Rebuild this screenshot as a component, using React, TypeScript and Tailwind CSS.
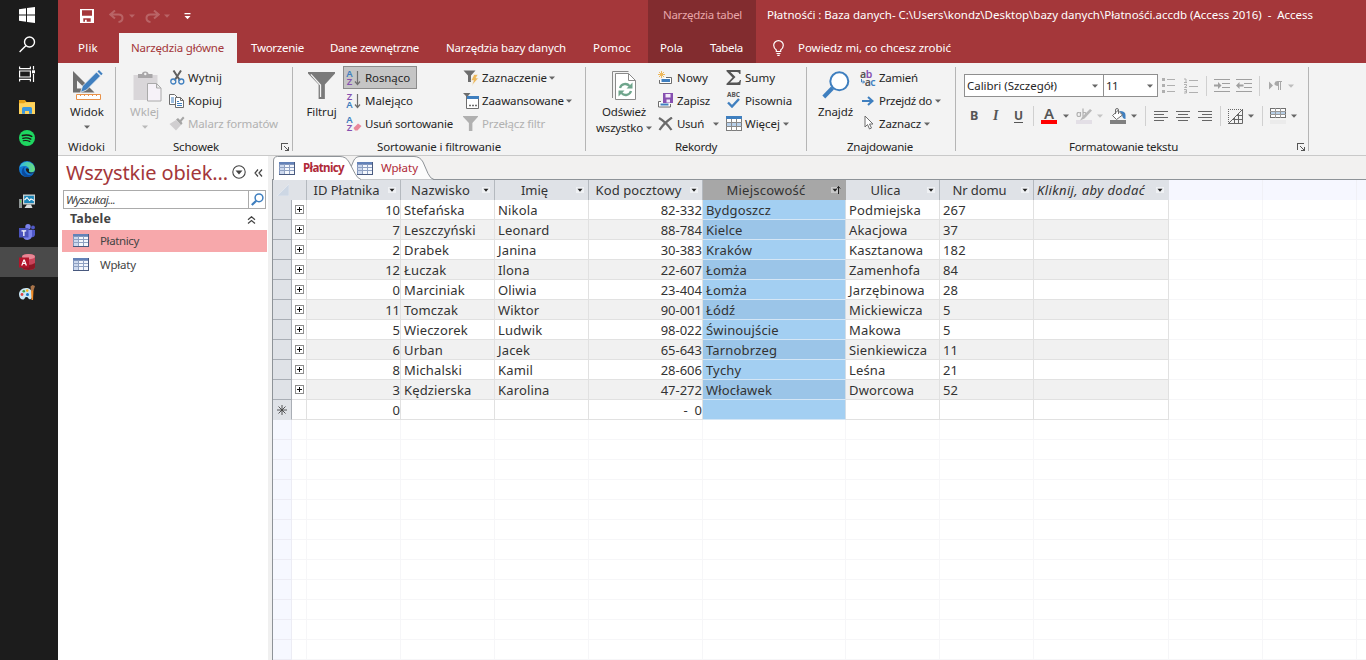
import { useLayoutEffect, useRef, useState } from 'react';
import type { ReactNode } from 'react';

/* Text label whose letter spacing is computed so that it spans `w` pixels. */
function T({ w, className = '', children }: { w: number; className?: string; children: string }) {
  const ref = useRef<HTMLSpanElement>(null);
  const [spacing, setSpacing] = useState(0);
  useLayoutEffect(() => {
    if (!ref.current) return;
    const natural = ref.current.getBoundingClientRect().width;
    setSpacing((w - natural) / children.length);
  }, [w, children]);
  return (
    <span ref={ref} className={`inline-block shrink-0 whitespace-pre ${className}`} style={{ letterSpacing: spacing }}>
      {children}
    </span>
  );
}

function Caret({ className = 'text-[#666]' }: { className?: string }) {
  return (
    <svg width="6" height="4" viewBox="0 0 6 4" className={`shrink-0 ${className}`}>
      <path d="M0 0.5h6L3 3.7z" fill="currentColor" />
    </svg>
  );
}

/* ---------- Taskbar ---------- */

const taskIcons: { top: string; icon: ReactNode; active?: boolean }[] = [
  {
    top: 'h-[29px]',
    icon: (
      <svg width="16" height="16" viewBox="0 0 16 16" fill="#fff">
        <path d="M0 2.3L7 1.3V7.6H0zM8 1.1L16 0V7.6H8zM0 8.5H7V14.8L0 13.8zM8 8.5H16V16L8 14.9z" />
      </svg>
    ),
  },
  {
    top: 'h-[30px]',
    icon: (
      <svg width="17" height="17" viewBox="0 0 17 17" fill="none" stroke="#fff" strokeWidth="1.4">
        <circle cx="10.5" cy="6" r="5" />
        <path d="M6.8 9.7L0.6 16" />
      </svg>
    ),
  },
  {
    top: 'h-[29px]',
    icon: (
      <svg width="16" height="16" viewBox="0 0 16 16" fill="none" stroke="#fff" strokeWidth="1.2">
        <path d="M0.6 0.5V2.6H11.4V0.5M0.6 15.5V13.4H11.4V15.5M0.6 5H11.4V11H0.6zM14.5 0v3.6M14.5 8v8" />
        <path d="M13 4.3h3v3h-3z" fill="#fff" stroke="none" />
      </svg>
    ),
  },
  {
    top: 'h-[37px]',
    icon: (
      <svg width="16" height="14" viewBox="0 0 16 14">
        <path d="M0 0h6l1.5 2H16v4H0z" fill="#e8a317" />
        <path d="M0 3.2h5l1.4-1H16V14H0z" fill="#ffd35c" />
        <path d="M3 13.7V8.6q0-1.5 1.5-1.5h7q1.5 0 1.5 1.5v5.1h-3V11H6v2.7z" fill="#3a96dd" />
      </svg>
    ),
  },
  {
    top: 'h-[26px]',
    icon: (
      <svg width="16" height="16" viewBox="0 0 16 16">
        <circle cx="8" cy="8" r="8" fill="#1ed760" />
        <g fill="none" stroke="#191414" strokeLinecap="round">
          <path d="M3.4 5.6q5-1.5 9.3.8" strokeWidth="1.6" />
          <path d="M3.8 8.3q4.3-1.2 8 .8" strokeWidth="1.3" />
          <path d="M4.2 10.8q3.6-.9 6.7.8" strokeWidth="1.1" />
        </g>
      </svg>
    ),
  },
  {
    top: 'h-[35px]',
    icon: (
      <svg width="16" height="16" viewBox="0 0 16 16">
        <defs>
          <linearGradient id="edgeTop" x1="0" x2="1">
            <stop offset="0" stopColor="#2bb5ea" />
            <stop offset="1" stopColor="#6be07a" />
          </linearGradient>
        </defs>
        <circle cx="8" cy="8" r="8" fill="#1277d4" />
        <path d="M.2 7A8 8 0 0 1 16 8c0 2-1.5 3.2-3.5 3.2-2.7 0-3-1-2.6-1.7C11 7.5 8.7 5 6 5 3.5 5 1.3 5.5.2 7z" fill="url(#edgeTop)" />
        <path d="M6 5.8C4 8 5.5 13.500 10 14c2 .2 3.7-.5 4.7-1.7-1.5 2.7-4.2 3.9-7 3.7C4 15.6 2 12 3 9c.5-1.7 1.7-2.8 3-3.2z" fill="#0c4a9c" />
        <path d="M6.8 8.5c.3 3 3.2 4.800 7.800 3.600l.7-.9c-3 1-6.500 0-5.300-2 .7-1.300-2.700-3.200-3.200-.7z" fill="#1c1c1c" />
      </svg>
    ),
  },
  {
    top: 'h-[30px]',
    icon: (
      <svg width="17" height="15" viewBox="0 0 17 15">
        <path d="M4 0.5h12v10H4z" fill="#cfd3d3" />
        <path d="M5.2 1.8h9.7v7.3H5.2z" fill="#1c86b8" />
        <path d="M5.5 6l2.500-2.500 2.500 3L12 5l3 1.5" stroke="#fff" strokeWidth="1.1" fill="none" />
        <path d="M0 5h3v9H0z" fill="#8e9494" />
        <path d="M8 10.5h4l1.5 3.5h-8z" fill="#d8dcdc" />
        <path d="M1 6.5h1v2H1z" fill="#5ee04a" />
      </svg>
    ),
  },
  {
    top: 'h-[31px]',
    icon: (
      <svg width="16" height="16" viewBox="0 0 16 16">
        <circle cx="9" cy="2.8" r="2.7" fill="#7b83eb" />
        <circle cx="14" cy="3.5" r="1.9" fill="#5059c9" />
        <path d="M10 6h6v5q-1 3-4 2z" fill="#5059c9" />
        <path d="M4 5.8h9v6q-.5 4-4.5 4.2-4-.2-4.5-4z" fill="#7b83eb" />
        <path d="M0 4h9.5v9.5H0z" fill="#4b53bc" />
        <path d="M2.5 6.2h4.700v1.300H5.5v4.5H4.2V7.5H2.5z" fill="#fff" />
      </svg>
    ),
  },
  {
    top: 'h-[30px]',
    active: true,
    icon: (
      <svg width="16" height="16" viewBox="0 0 16 16">
        <path d="M3 2.5Q4 0 9.5 0T16 2.5V13.5Q15 16 9.5 16T3 13.5z" fill="#c8445a" />
        <path d="M3 9q3 2 6.5 2T16 9v4.500Q15 16 9.5 16T3 13.5z" fill="#8c1825" />
        <ellipse cx="9.5" cy="2.7" rx="6.5" ry="2.7" fill="#e88795" />
        <path d="M0 3.5h10v10H0z" fill="#b3152a" />
        <path d="M2.2 11.5L4.4 5.5h1.400l2.200 6H6.6L6.1 10H4L3.5 11.5zM4.4 8.9h1.300L5 6.900z" fill="#fff" fillRule="evenodd" />
      </svg>
    ),
  },
  {
    top: 'h-[32px]',
    icon: (
      <svg width="16" height="16" viewBox="0 0 16 16">
        <path d="M7 3C2.5 3 0 6 0 9.5 0 13 2.5 15 4.5 14.5 6 14 5.5 12 7.5 12s2 3 4 2.2C13 13.5 14 11 13.5 8.5 13 5 10.5 3 7 3z" fill="#c9e6f5" />
        <circle cx="3" cy="9.5" r="1.4" fill="#e0433f" />
        <circle cx="4.8" cy="6.2" r="1.3" fill="#43a047" />
        <circle cx="8.2" cy="5.6" r="1.3" fill="#f9b51d" />
        <circle cx="8.5" cy="9.5" r="1.5" fill="#1976c5" />
        <path d="M12 5h2.500l-.5 10h-1.500z" fill="#f08a24" />
        <path d="M11.5 1.5L13.5 0l2.500 1-1.500 4.500H12z" fill="#a9744a" />
      </svg>
    ),
  },
];

function Taskbar() {
  return (
    <aside className="flex h-full w-[58px] shrink-0 flex-col bg-[#1c1c1c]">
      {taskIcons.map((t, i) => (
        <div key={i} className={`flex items-center justify-center pr-1 ${t.top} ${t.active ? 'bg-[#4a4a4a]' : ''}`}>
          {t.icon}
        </div>
      ))}
    </aside>
  );
}

/* ---------- Header ---------- */

function Header() {
  return (
    <header className="flex h-[63px] shrink-0 bg-[#a4373a] text-[11.5px] leading-none text-white">
      <div className="flex w-[590px] flex-col">
        <div className="flex h-[33px] items-center pb-px pl-[22px]">
          <svg width="14" height="14" viewBox="0 0 14 14" fill="#fff">
            <path d="M0 0h14v14H0zM2 1.3v5.500h10V1.3zM3.3 9.3v3.500h1.700v-2h1.700v2h4V9.3z" fillRule="evenodd" />
          </svg>
          <svg width="15" height="13" viewBox="0 0 15 13" className="ml-[15px]" fill="none" stroke="#b96466" strokeWidth="2">
            <path d="M6 0.5L1.3 4.5 6 8.5M1.5 4.5H9.5Q13.5 4.5 13.5 8T9.5 12" />
          </svg>
          <Caret className="ml-[5px] text-[#b96466]" />
          <svg width="15" height="13" viewBox="0 0 15 13" className="ml-[10px]" fill="none" stroke="#b96466" strokeWidth="2">
            <path d="M9 0.5L13.7 4.5 9 8.5M13.5 4.5H5.5Q1.5 4.5 1.5 8T5.5 12" />
          </svg>
          <Caret className="ml-[4px] text-[#b96466]" />
          <svg width="7" height="7" viewBox="0 0 7 7" className="ml-[14px]" fill="#fff">
            <path d="M0.5 0h6v1.300h-6zM0.5 3h6L3.5 6.3z" />
          </svg>
        </div>
        <nav className="flex h-[30px] items-center">
          <T w={20} className="ml-[20px]">Plik</T>
          <div className="ml-[21px] flex h-full w-[118px] items-center bg-[#f3f3f3] pl-3 text-[#a4373a]">
            <T w={93}>Narzędzia główne</T>
          </div>
          <T w={53} className="ml-[14px]">Tworzenie</T>
          <T w={89} className="ml-[26px]">Dane zewnętrzne</T>
          <T w={120} className="ml-[27px]">Narzędzia bazy danych</T>
          <T w={38} className="ml-[27px]">Pomoc</T>
        </nav>
      </div>
      <div className="flex w-[108px] flex-col bg-[#822c2f] pl-3">
        <div className="flex h-[33px] items-center pb-[3px] pl-[3px] text-[#e8a6a9]">
          <T w={79}>Narzędzia tabel</T>
        </div>
        <div className="flex h-[30px] items-center">
          <T w={23}>Pola</T>
          <T w={33} className="ml-[27px]">Tabela</T>
        </div>
      </div>
      <div className="flex flex-col pl-[11px]">
        <div className="flex h-[33px] items-center pb-[3px]">
          <T w={546}>Płatnośći : Baza danych- C:\Users\kondz\Desktop\bazy danych\Płatnośći.accdb (Access 2016)  -  Access</T>
        </div>
        <div className="flex h-[30px] items-center pl-[6px]">
          <svg width="11" height="16" viewBox="0 0 11 16" fill="none" stroke="#fff" strokeWidth="1.2">
            <path d="M3.3 11.5V10Q.7 8 .7 5.3A4.8 4.7 0 0 1 10.3 5.3Q10.3 8 7.7 10v1.500zM3.500 13.500h4M4.300 15.300h2.400" />
          </svg>
          <T w={153} className="ml-[14px]">Powiedz mi, co chcesz zrobić</T>
        </div>
      </div>
    </header>
  );
}

/* ---------- Ribbon ---------- */

function Small({ icon, label, w, caret, caretGap = 'ml-[3px]', off, className = '' }: {
  icon: ReactNode; label: string; w: number; caret?: boolean; caretGap?: string; off?: boolean; className?: string;
}) {
  return (
    <div className={`flex h-[23px] items-center ${off ? 'text-[#b1b1b1]' : ''} ${className}`}>
      <span className="mr-[3px] flex w-4 shrink-0 items-center">{icon}</span>
      <T w={w}>{label}</T>
      {caret && <Caret className={`text-[#666] ${caretGap}`} />}
    </div>
  );
}

function Launcher() {
  return (
    <svg width="8" height="8" viewBox="0 0 8 8" fill="none" stroke="#555" shapeRendering="crispEdges">
      <path d="M0.5 7V0.5H7" />
      <path d="M3 3l4 4M7.5 3.5V7.5H3.5" />
    </svg>
  );
}

function Group({ width, label, labelW, labelPad, launcher, children }: {
  width: string; label: string; labelW: number; labelPad: string; launcher?: string; children: ReactNode;
}) {
  return (
    <section className={`flex shrink-0 ${width}`}>
      <div className="flex min-w-0 flex-1 flex-col pt-[3px]">
        <div className="flex h-[72px]">{children}</div>
        <div className={`flex h-[17px] items-center ${labelPad}`}>
          <T w={labelW}>{label}</T>
          {launcher && <span className={launcher}><Launcher /></span>}
        </div>
      </div>
      <div className="mt-1 h-[84px] w-px bg-[#b5b5b5]" />
    </section>
  );
}

function Big({ icon, label, w, caret, off, className = '' }: {
  icon: ReactNode; label: string; w: number; caret?: boolean; off?: boolean; className?: string;
}) {
  return (
    <div className={`flex shrink-0 flex-col items-center pt-[3px] ${off ? 'text-[#b1b1b1]' : ''} ${className}`}>
      <div className="flex h-8 items-center justify-center">{icon}</div>
      <div className="mt-[3px] flex h-4 items-center"><T w={w}>{label}</T></div>
      {caret && <Caret className={`mt-[5px] ${off ? 'text-[#b9b9b9]' : 'text-[#666]'}`} />}
    </div>
  );
}

function SortIcon({ top, bottom, topColor, bottomColor, eraser }: {
  top: string; bottom: string; topColor: string; bottomColor: string; eraser?: boolean;
}) {
  return (
    <span className="flex h-[17px] w-4 items-center text-[9.5px] leading-[8px] font-semibold">
      <span className="flex w-[7px] flex-col items-center">
        <span className={topColor}>{top}</span>
        <span className={bottomColor}>{bottom}</span>
      </span>
      {eraser ? (
        <svg width="9" height="8" viewBox="0 0 8 8" className="mt-[6px]">
          <path d="M0 5L4.5 0.5 8 3 4 7.5H1.5z" fill="#e9889b" />
        </svg>
      ) : (
        <svg width="7" height="16" viewBox="0 0 7 16" fill="none" stroke="#6d6d6d" className="ml-px">
          <path d="M3.5 1v13M1 11.5l2.500 3 2.500-3" strokeWidth="1.2" />
        </svg>
      )}
    </span>
  );
}

function Lines({ d, color = '#666', w = 14, h = 12 }: { d: string; color?: string; w?: number; h?: number }) {
  return (
    <svg width={w} height={h} viewBox={`0 0 ${w} ${h}`} fill="none" stroke={color} strokeWidth="1" shapeRendering="crispEdges" className="shrink-0">
      <path d={d} />
    </svg>
  );
}

const Sep = ({ className = '' }: { className?: string }) => <span className={`h-5 w-px shrink-0 bg-[#d0d0d0] ${className}`} />;

const Funnel = ({ size, color }: { size: number; color: string }) => (
  <svg width={size} height={size} viewBox="0 0 28 28">
    <path d="M0 0h28v1.500L17.500 13V28h-6.500V13L0 1.500z" fill={color} />
    {size > 20 && <path d="M3 2.5L13 13.5V26" stroke="#f3f3f3" strokeWidth="1.3" fill="none" />}
  </svg>
);

function Ribbon() {
  return (
    <div className="flex h-[93px] shrink-0 border-b border-[#c9c9c9] bg-[#f3f3f3] text-[11.5px] leading-none text-[#262626]">
      <Group width="w-[58px]" label="Widoki" labelW={37} labelPad="pl-[10px]">
        <Big className="w-[58px]" label="Widok" w={34} caret icon={
          <svg width="32" height="30" viewBox="0 0 32 30">
            <path d="M2 1V22.500H23.500zM6 10.500v8h8z" fill="#6f6f6f" fillRule="evenodd" />
            <path d="M9.500 22.500l2-6.500L25.500 2l4 4L15.500 20z" fill="#3f7fbf" stroke="#f3f3f3" strokeWidth=".8" />
            <path d="M26.500 1.500L28 0l3.700 3.700-1.500 1.500z" fill="#3f7fbf" />
            <path d="M5.500 24.500h24v5h-24zM9.500 24v2M13.500 24v2M17.500 24v2M21.500 24v2M25.500 24v2" fill="#fff" stroke="#e8924a" />
          </svg>
        } />
      </Group>

      <Group width="w-[177px]" label="Schowek" labelW={46} labelPad="pl-[57px]" launcher="ml-[62px]">
        <Big className="w-[53px] pl-[4px]" label="Wklej" w={29} caret off icon={
          <svg width="29" height="31" viewBox="0 0 29 31" className="mt-[2px] ml-[5px]">
            <path d="M0.5 4h24v25H0.5z" fill="#d9d6d9" />
            <path d="M5 3h4q0-2.500 3.200-2.500T15.500 3h4v4H5z" fill="#a8a6a8" />
            <circle cx="12.3" cy="3" r="1.2" fill="#f3f3f3" />
            <path d="M14.5 12.500h9l4.500 4.500v13H14.500zM23.500 12.500V17H28" fill="#f6f2f8" stroke="#aaa" />
          </svg>
        } />
        <div>
          <Small label="Wytnij" w={34} icon={
            <svg width="15" height="15" viewBox="0 0 15 15" fill="none" className="ml-px">
              <path d="M3.5 0.5L10 10.5M11 0.5L4.5 10.5" stroke="#5f5f5f" strokeWidth="2" />
              <circle cx="3.3" cy="11.5" r="2.5" stroke="#3f7fbf" strokeWidth="1.3" />
              <circle cx="11.3" cy="11.5" r="2.5" stroke="#3f7fbf" strokeWidth="1.3" />
            </svg>
          } />
          <Small label="Kopiuj" w={34} icon={
            <svg width="15" height="14" viewBox="0 0 15 14">
              <path d="M0.5 0.5h5l3 3v7h-8z" fill="#fff" stroke="#6d6d6d" />
              <path d="M2 4h3M2 6h3M2 8h3" stroke="#3f7fbf" />
              <path d="M6.5 3.5h5l3 3v7h-8zM11.5 3.5v3h3" fill="#fff" stroke="#6d6d6d" />
              <path d="M8 7.5h2M8 9.5h5M8 11.5h5" stroke="#3f7fbf" />
            </svg>
          } />
          <Small label="Malarz formatów" w={90} off icon={
            <svg width="16" height="15" viewBox="0 0 16 15">
              <path d="M0.5 8L7 4l5 5-5 5.500z" fill="#d0ced0" />
              <path d="M7 3.5l2-1.500 2 2L14 0.5 15.5 2l-3 3.500 1 2L12 9z" fill="#a5a5a5" />
            </svg>
          } />
        </div>
      </Group>

      <Group width="w-[293px]" label="Sortowanie i filtrowanie" labelW={124} labelPad="pl-[84px]">
        <Big className="w-[50px] pl-[7px]" label="Filtruj" w={30} icon={<Funnel size={27} color="#7a7a7a" />} />
        <div className="w-[117px]">
          <Small className="w-[74px] border border-[#8c8c8c] bg-[#c5c5c5] pl-[2px]" label="Rosnąco" w={45} icon={
            <SortIcon top="A" bottom="Z" topColor="text-[#3f7fbf]" bottomColor="text-[#8650b0]" />} />
          <Small className="pl-[3px]" label="Malejąco" w={48} icon={
            <SortIcon top="Z" bottom="A" topColor="text-[#8650b0]" bottomColor="text-[#3f7fbf]" />} />
          <Small className="pl-[3px]" label="Usuń sortowanie" w={88} icon={
            <SortIcon top="A" bottom="Z" topColor="text-[#3f7fbf]" bottomColor="text-[#8650b0]" eraser />} />
        </div>
        <div className="pl-[3px]">
          <Small label="Zaznaczenie" w={65} caret caretGap="ml-[2px]" icon={
            <svg width="16" height="16" viewBox="0 0 16 16">
              <path d="M0.5 0.5h12L8 5.5V12H5V5.500z" fill="#6d6d6d" />
              <path d="M11 4.5h4l-2 3.500h2.500L9 15.5l1.500-5H8z" fill="#edb85c" stroke="#f3f3f3" strokeWidth=".6" />
            </svg>
          } />
          <Small label="Zaawansowane" w={82} caret caretGap="ml-[2px]" icon={
            <svg width="16" height="16" viewBox="0 0 16 16">
              <path d="M0 0h7.500L5 3v3.500H3V3z" fill="#6d6d6d" />
              <path d="M3.5 4.5h12v11h-12z" fill="#fff" stroke="#6d6d6d" />
              <path d="M4 3h12v3H4z" fill="#3f7fbf" />
              <path d="M6 12.5h2M9 12.5h2M12 12.5h2" stroke="#6d6d6d" strokeWidth="1.5" />
            </svg>
          } />
          <Small label="Przełącz filtr" w={63} off icon={<Funnel size={15} color="#b0b0b0" />} />
        </div>
      </Group>

      <Group width="w-[221px]" label="Rekordy" labelW={42} labelPad="pl-[89px]">
        <div className="flex w-[72px] shrink-0 flex-col items-center pt-[3px] pl-[4px]">
          <div className="flex h-8 items-center">
            <svg width="24" height="31" viewBox="0 0 24 31">
              <path d="M0.5 28V1.5h16" fill="none" stroke="#8a8a8a" />
              <path d="M3.5 3.5h13l7 7v19h-20z" fill="#fff" stroke="#8a8a8a" />
              <path d="M16.5 3.5v7h7" fill="none" stroke="#8a8a8a" />
              <path d="M8 18a5.500 5.500 0 0 1 9.500-2M19 21a5.500 5.500 0 0 1-9.500 2" fill="none" stroke="#6fa58c" strokeWidth="2.3" />
              <path d="M20.500 12.500V18.500h-6zM6.500 26.500v-6h6z" fill="#6fa58c" />
            </svg>
          </div>
          <div className="mt-[3px] flex h-4 items-center"><T w={44}>Odśwież</T></div>
          <div className="flex h-4 items-center"><T w={47}>wszystko</T><Caret className="ml-[3px] text-[#666]" /></div>
        </div>
        <div className="w-[68px]">
          <Small label="Nowy" w={31} icon={
            <svg width="15" height="14" viewBox="0 0 15 14">
              <path d="M3.5 0v7M0 3.5h7M1 1l5 5M6 1L1 6" stroke="#edb85c" />
              <path d="M8 6.5h5.500v6H1.500V9" fill="#fff" stroke="#6d6d6d" />
              <path d="M3.5 8h8.500v3H3.500z" fill="#3f7fbf" />
            </svg>
          } />
          <Small label="Zapisz" w={33} icon={
            <svg width="15" height="15" viewBox="0 0 15 15">
              <path d="M3 8.5H.5v5.500h12v-3" fill="#fff" stroke="#6d6d6d" />
              <path d="M2.5 10.5h8v2h-8z" fill="#3f7fbf" />
              <path d="M5 0h10v10H5z" fill="#8650b0" />
              <path d="M7.5 1h5v3.500h-5zM8.500 6.500h3.500v3H8.500z" fill="#f3e8fa" />
            </svg>
          } />
          <Small label="Usuń" w={27} caret caretGap="ml-[9px]" icon={
            <svg width="15" height="14" viewBox="0 0 15 14" fill="none" stroke="#6a6a6a">
              <path d="M1 1Q8 5 13.5 13" strokeWidth="2.2" /><path d="M14 0.5Q6 6 1.5 13" strokeWidth="2.2" />
            </svg>
          } />
        </div>
        <div>
          <Small label="Sumy" w={30} icon={
            <svg width="15" height="15" viewBox="0 0 15 15">
              <path d="M0.5 0H14.5V4H13.5Q13 2 11 2H4.5L9.5 7 4 12.500h7q2.300 0 3-2.500h1L14.300 15H0.500v-1.200L6.500 7.500.500 1.300z" fill="#555" />
            </svg>
          } />
          <Small label="Pisownia" w={47} icon={
            <span className="ml-px flex flex-col items-center pb-px">
              <T w={13} className="text-[6.5px] leading-[6px] font-bold text-[#555]">ABC</T>
              <svg width="13" height="10" viewBox="0 0 13 10"><path d="M1 4.5l4 4L12 1" fill="none" stroke="#3f7fbf" strokeWidth="2.4" /></svg>
            </span>
          } />
          <Small label="Więcej" w={35} caret icon={
            <svg width="16" height="15" viewBox="0 0 16 15" shapeRendering="crispEdges">
              <path d="M0.5 0.5h15v14H.5z" fill="#fff" stroke="#7d7d7d" />
              <path d="M0 0h16v3H0z" fill="#3f7fbf" />
              <path d="M1 7h14v4H1z" fill="#b8d0ea" />
              <path d="M5.5 3v12M10.5 3v12M0 6.5h16M0 10.5h16" stroke="#8a8a8a" />
            </svg>
          } />
        </div>
      </Group>

      <Group width="w-[149px]" label="Znajdowanie" labelW={66} labelPad="pl-[40px]">
        <Big className="w-[53px] pl-[4px]" label="Znajdź" w={35} icon={
          <svg width="28" height="28" viewBox="0 0 28 28">
            <path d="M10.5 17L1.8 26" stroke="#3f7fbf" strokeWidth="4" />
            <circle cx="17.3" cy="10.3" r="9" fill="#fff" stroke="#3f7fbf" strokeWidth="2" />
          </svg>
        } />
        <div>
          <Small label="Zamień" w={39} icon={
            <span className="flex flex-col items-center text-[10.5px] leading-[8px] font-semibold text-[#555]">
              <span className="mr-[4px] tracking-[-0.5px]">a<span className="text-[#8650b0]">b</span></span>
              <span className="flex tracking-[-0.5px]">
                <svg width="4" height="5" viewBox="0 0 4 5" className="mt-px"><path d="M0.5 0v3h3M2 1.5L3.5 3 2 4.5" fill="none" stroke="#3f7fbf" /></svg>
                a<span className="text-[#3f7fbf]">c</span>
              </span>
            </span>
          } />
          <Small label="Przejdź do" w={53} caret icon={
            <svg width="12" height="10" viewBox="0 0 12 10" fill="none" stroke="#3f7fbf" strokeWidth="2" className="ml-[2px]">
              <path d="M0 5h10M6 1l4.500 4L6 9" />
            </svg>
          } />
          <Small label="Zaznacz" w={42} caret icon={
            <svg width="10" height="15" viewBox="0 0 10 15" fill="#fff" stroke="#6d6d6d" className="mb-[2px] ml-[4px]">
              <path d="M1 1v11l2.500-2.500 2 4.500 2-1-2-4H9z" />
            </svg>
          } />
        </div>
      </Group>

      <Group width="w-[353px]" label="Formatowanie tekstu" labelW={109} labelPad="pl-[113px]" launcher="ml-[119px]">
        <div className="flex flex-col pl-2">
          <div className="flex h-[39px] items-center">
            <div className="flex h-[23px] w-[140px] items-center border border-[#8f8f8f] bg-white pl-[2px]">
              <T w={90}>Calibri (Szczegół)</T><Caret className="ml-[35px] text-[#666]" />
            </div>
            <div className="-ml-px flex h-[23px] w-[55px] items-center border border-[#8f8f8f] bg-white pl-[2px]">
              <T w={12}>11</T><Caret className="ml-[29px] text-[#666]" />
            </div>
            <svg width="14" height="15" viewBox="0 0 14 15" className="ml-[4px]">
              <path d="M0 0h3v3H0zM0 6h3v3H0zM0 12h3v3H0zM5 1h8v1H5zM5 7h8v1H5zM5 13h8v1H5z" fill="#b0b0b0" />
            </svg>
            <svg width="14" height="16" viewBox="0 0 14 16" className="ml-[8px]">
              <path d="M5 2h9v1H5zM5 8h9v1H5zM5 14h9v1H5z" fill="#b0b0b0" />
              <path d="M0 1h2v3M0 4.5h3M0 6.5h2.500v1.500L.5 9.500H3M0 11.500h2.500V15H0M0.500 13.300h2" fill="none" stroke="#b0b0b0" />
            </svg>
            <Sep className="ml-[8px]" />
            <svg width="16" height="13" viewBox="0 0 16 13" className="ml-[7px]">
              <path d="M0 0h16v1H0zM8 4h8v1H8zM8 8h8v1H8zM0 12h16v1H0zM0 5.500h4V3l3.500 3.500L4 10V7.500H0z" fill="#a0a0a0" />
            </svg>
            <svg width="16" height="13" viewBox="0 0 16 13" className="ml-[6px]">
              <path d="M0 0h16v1H0zM8 4h8v1H8zM8 8h8v1H8zM0 12h16v1H0zM7.500 5.500h-4V3L0 6.500 3.500 10V7.500h4z" fill="#a0a0a0" />
            </svg>
            <Sep className="ml-[7px]" />
            <svg width="13" height="9" viewBox="0 0 13 9" className="ml-[9px]">
              <path d="M0 0.5L4 4.5 0 8.5zM8.500 0H13V1H12V9H11V1H10V9H9V5Q5 5 5.500 2.300 6 0 8.500 0z" fill="#a8a8a8" />
            </svg>
            <Caret className="ml-[6px] text-[#bdbdbd]" />
          </div>
          <div className="flex h-[22px] items-center text-[13px] text-[#555]">
            <span className="ml-[6px] w-[9px] text-[12.5px] font-bold">B</span>
            <span className="ml-[14px] w-[8px] font-['Liberation_Serif',serif] text-[14px] font-bold italic">I</span>
            <span className="ml-[13px] w-[9px] border-b border-[#555] text-center text-[12px] leading-[12px] font-bold">U</span>
            <Sep className="ml-[10px]" />
            <span className="ml-[7px] flex h-4 w-4 flex-col items-center border-b-4 border-[#f00] text-[15px] leading-[11px] font-semibold">A</span>
            <Caret className="ml-[6px] text-[#666]" />
            <svg width="16" height="16" viewBox="0 0 16 16" className="ml-[7px]">
              <path d="M0 12h16v4H0z" fill="#e3dfe6" />
              <path d="M4.500 4v4.500M4.500 5Q1 3.500 1 6.500T4.500 8M7 0.500v8M7 5q3-1.500 3 1.500T7 8" fill="none" stroke="#b0b0b0" strokeWidth="1.2" />
              <path d="M4 12.500l2.500-4L14 1l2 1.500L8.500 10.500z" fill="#b9b9b9" />
            </svg>
            <Caret className="ml-[5px] text-[#c4c4c4]" />
            <svg width="17" height="16" viewBox="0 0 17 16" className="ml-[7px]">
              <path d="M0 12h16v4H0z" fill="#808080" />
              <path d="M9.500 3q6 0 6 4v4q-3 0-3.500-4z" fill="#3f7fbf" />
              <path d="M2.500 7.500L8 2.500l4.500 4.500-6 4.500z" fill="#fff" stroke="#6d6d6d" />
              <path d="M5.500 6V2q0-1.500 1.500-1.500T8.500 2v4" fill="none" stroke="#6d6d6d" />
            </svg>
            <Caret className="ml-[4px] text-[#666]" />
            <Sep className="ml-[8px]" />
            <span className="ml-[8px] flex gap-[8px]">
              <Lines d="M0 .5h14M0 3.5h10M0 6.5h14M0 9.5h10" h={10} />
              <Lines d="M0 .5h14M2 3.5h10M0 6.5h14M2 9.5h10" h={10} />
              <Lines d="M0 .5h14M4 3.5h10M0 6.5h14M4 9.5h10" h={10} />
            </span>
            <Sep className="ml-[8px]" />
            <svg width="15" height="15" viewBox="0 0 15 15" className="ml-[7px]" fill="none" stroke="#666">
              <path d="M0 .5h15M.5 0v15" strokeDasharray="1 1" />
              <path d="M0.5 14.5L14.5 .5v14zM6.500 9v5.500M10.500 5v9.500M5 10.500h9.500M9 6.500h5.500" />
            </svg>
            <Caret className="ml-[5px] text-[#666]" />
            <Sep className="ml-[8px]" />
            <svg width="16" height="16" viewBox="0 0 16 16" className="ml-[7px]" shapeRendering="crispEdges">
              <path d="M0.5 .5h15v9H.5z" fill="#fff" stroke="#707070" />
              <path d="M1 4h14v2.500H1z" fill="#b8cfe6" />
              <path d="M5.5 0v10M10.5 0v10M0 3.5h16M0 6.5h16" stroke="#999" />
              <path d="M0 12h16v4H0z" fill="#ebebeb" />
            </svg>
            <Caret className="ml-[5px] text-[#666]" />
          </div>
        </div>
      </Group>
    </div>
  );
}

/* ---------- Navigation pane ---------- */

function TableIcon() {
  return (
    <svg width="16" height="13" viewBox="0 0 16 13" shapeRendering="crispEdges" className="shrink-0">
      <path d="M0 0h16v13H0z" fill="#8196bd" />
      <path d="M1 3h14v9H1z" fill="#f4f7fc" />
      <path d="M1 3h4v9H1z" fill="#cdd9ee" />
      <path d="M5.5 1v12M10.5 1v12M0 5.5h16M0 8.5h16" stroke="#8fa1c2" />
      <path d="M0 0h16v2H0z" fill="#6382b8" />
      <path d="M15.5 0v13M0 12.5h16" stroke="#48597e" />
    </svg>
  );
}

function NavPane() {
  return (
    <aside className="flex w-[210px] shrink-0 flex-col bg-white text-[11.5px] leading-none text-[#444]">
      <div className="flex h-[34px] items-center pl-[8px]">
        <T w={162} className="text-[20px] text-[#a4373a]">Wszystkie obiek...</T>
        <svg width="14" height="14" viewBox="0 0 14 14" className="mb-[2px] ml-[4px]">
          <circle cx="7" cy="7" r="6.2" fill="none" stroke="#444" strokeWidth="1.1" />
          <path d="M3.5 5.5h7L7 9.5z" fill="#444" />
        </svg>
        <svg width="9" height="8" viewBox="0 0 9 8" className="ml-[8px]" fill="none" stroke="#444" strokeWidth="1.2">
          <path d="M4 .5L1 4l3 3.500M8 .5L5 4l3 3.500" />
        </svg>
      </div>
      <div className="ml-[5px] flex h-[19px] w-[203px] items-center border border-[#ababab]">
        <T w={49} className="ml-[2px] italic">Wyszukaj...</T>
        <span className="ml-auto flex h-full w-[17px] items-center justify-center border-l border-[#ababab]">
          <svg width="13" height="13" viewBox="0 0 13 13" fill="none" stroke="#3f7fbf">
            <circle cx="8" cy="4.8" r="3.9" strokeWidth="1.5" />
            <path d="M5.2 7.7L.8 12" strokeWidth="2.2" />
          </svg>
        </span>
      </div>
      <div className="flex h-[21px] items-center justify-between pr-[12px] pl-3">
        <T w={41} className="text-[12.5px] font-bold">Tabele</T>
        <svg width="9" height="8" viewBox="0 0 9 8" fill="none" stroke="#444" strokeWidth="1.2">
          <path d="M1 3.700l3.500-3 3.500 3M1 7.500l3.500-3 3.500 3" />
        </svg>
      </div>
      <div className="mx-1 mr-px flex h-[22px] items-center bg-[#f7a8ab] pl-[11px]">
        <span className="mb-[2px]"><TableIcon /></span><T w={39} className="ml-[11px]">Płatnicy</T>
      </div>
      <div className="mx-1 flex h-[26px] items-center pl-[11px]">
        <span className="mb-[2px]"><TableIcon /></span><T w={36} className="ml-[11px]">Wpłaty</T>
      </div>
    </aside>
  );
}

/* ---------- Datasheet ---------- */

const widths = ['w-[19px]', 'w-[15px]', 'w-[94px]', 'w-[94px]', 'w-[94px]', 'w-[114px]', 'w-[143px]', 'w-[94px]', 'w-[94px]', 'w-[135px]', 'w-[94px]', 'w-[94px]', 'w-[10px]'];

const heads: { label: string; w: number }[] = [
  { label: 'ID Płatnika', w: 66 },
  { label: 'Nazwisko', w: 59 },
  { label: 'Imię', w: 27 },
  { label: 'Kod pocztowy', w: 86 },
  { label: 'Miejscowość', w: 79 },
  { label: 'Ulica', w: 30 },
  { label: 'Nr domu', w: 54 },
  { label: 'Kliknij, aby dodać', w: 108 },
];

const rows: string[][] = [
  ['10', 'Stefańska', 'Nikola', '82-332', 'Bydgoszcz', 'Podmiejska', '267'],
  ['7', 'Leszczyński', 'Leonard', '88-784', 'Kielce', 'Akacjowa', '37'],
  ['2', 'Drabek', 'Janina', '30-383', 'Kraków', 'Kasztanowa', '182'],
  ['12', 'Łuczak', 'Ilona', '22-607', 'Łomża', 'Zamenhofa', '84'],
  ['0', 'Marciniak', 'Oliwia', '23-404', 'Łomża', 'Jarzębinowa', '28'],
  ['11', 'Tomczak', 'Wiktor', '90-001', 'Łódź', 'Mickiewicza', '5'],
  ['5', 'Wieczorek', 'Ludwik', '98-022', 'Świnoujście', 'Makowa', '5'],
  ['6', 'Urban', 'Jacek', '65-643', 'Tarnobrzeg', 'Sienkiewicza', '11'],
  ['8', 'Michalski', 'Kamil', '28-606', 'Tychy', 'Leśna', '21'],
  ['3', 'Kędzierska', 'Karolina', '47-272', 'Włocławek', 'Dworcowa', '52'],
  ['0', '', '', '-  0', '', '', ''],
];

function HeadCaret({ sorted }: { sorted?: boolean }) {
  return (
    <svg width={sorted ? 10 : 8} height="10" viewBox={sorted ? '0 0 10 10' : '0 0 8 10'} className="shrink-0">
      <path d="M0 2h8v6H0z" fill={sorted ? '#c9c9c9' : '#eff1f4'} />
      <path d="M1.500 3.700h5L4 6.700z" fill="#222" />
      {sorted && <path d="M7.500 1.500v7.500M5.800 3.500l1.700-2 1.700 2" stroke="#222" fill="none" />}
    </svg>
  );
}

function DocTabs() {
  return (
    <div className="flex h-[24px] border-b border-[#8e9398] bg-[#f2f1f0] pl-px text-[11.5px] leading-none text-[#b02a38]">
      <div className="relative z-10 -mb-px flex h-[24px] w-[88px] items-center pl-[6px]">
        <svg width="92" height="24" viewBox="0 0 92 24" className="absolute top-0 left-0">
          <path d="M.5 24V5Q.5 .5 4.500 .5H67Q73 .5 76 6L82 17.500Q84.500 22.500 88 23.500V24z" fill="#fff" />
          <path d="M.5 24V5Q.5 .5 4.500 .5H67Q73 .5 76 6L82 17.500Q84.500 22.500 88 23.500" fill="none" stroke="#8e9398" />
        </svg>
        <span className="relative flex items-center"><TableIcon /><T w={41} className="ml-2 font-bold">Płatnicy</T></span>
      </div>
      <div className="relative -ml-[10px] flex h-[24px] w-[90px] items-center pl-[6px]">
        <svg width="88" height="24" viewBox="0 0 88 24" className="absolute top-0 left-0">
          <path d="M0 11L2.500 5Q4.500 .5 9 .5H63Q69 .5 72 6L77 17.500Q79.500 23 83 23.500H6z" fill="#fcfcfc" />
          <path d="M0 11L2.500 5Q4.500 .5 9 .5H63Q69 .5 72 6L77 17.500Q79.500 23 83 23.500" fill="none" stroke="#8e9398" />
        </svg>
        <span className="relative flex items-center"><TableIcon /><T w={37} className="ml-[8px]">Wpłaty</T></span>
      </div>
    </div>
  );
}

function HeaderRow() {
  return (
    <div className="flex h-[20px] items-center">
      <div className="flex h-full w-[34px] shrink-0 items-center border-r border-[#b4b9bf] bg-[#dfe2e7] pl-[4px]">
        <svg width="12" height="12" viewBox="0 0 12 12"><path d="M12 0v12H0z" fill="#cdd7e4" stroke="#e9edf2" strokeWidth=".6" /></svg>
      </div>
      {heads.map((h, i) => {
        const last = i === 7;
        const sel = i === 4;
        return (
          <div key={h.label} className={`flex h-full shrink-0 items-center border-r pr-[4px] ${widths[i + 2]} ${sel ? 'border-[#a7a7a7] bg-[#a7a7a7]' : last ? 'border-[#dfe2e7] bg-[#dfe2e7]' : 'border-[#b4b9bf] bg-[#dfe2e7]'}`}>
            <span className={`flex flex-1 ${last ? 'pl-[3px] italic' : 'justify-center pr-[2px]'}`}>
              <T w={h.w}>{h.label}</T>
            </span>
            <HeadCaret sorted={sel} />
          </div>
        );
      })}
      <div className="h-full w-[94px] shrink-0 border-r border-[#f0f0f6] bg-[#f6f7ff]" />
      <div className="h-full w-[94px] shrink-0 border-r border-[#f0f0f6] bg-[#f6f7ff]" />
      <div className="h-full flex-1 bg-[#f6f7ff]" />
    </div>
  );
}

function DataRow({ cells, index }: { cells: string[]; index: number }) {
  const fresh = index === 10;
  const alt = index % 2 === 1;
  return (
    <div className="flex h-[20px]">
      <div className={`flex w-[19px] shrink-0 items-center justify-center border-r border-b bg-[#dfe2e7] ${fresh ? 'border-r-[#a9aeb5] border-b-[#dfe2e7]' : 'border-[#a9aeb5]'}`}>
        {fresh && (
          <svg width="10" height="10" viewBox="0 0 10 10" stroke="#444"><path d="M5 0v10M0 5h10M1.500 1.500l7 7M8.500 1.500l-7 7" strokeWidth=".9" /></svg>
        )}
      </div>
      <div className="flex w-[15px] shrink-0 items-center justify-center border-r border-b border-[#e1e1e1]">
        {!fresh && (
          <svg width="9" height="9" viewBox="0 0 9 9" shapeRendering="crispEdges" fill="#fff">
            <path d="M.5 .5h8v8h-8z" stroke="#8d8d8d" />
            <path d="M2 4.500h5M4.500 2v5" stroke="#111" />
          </svg>
        )}
      </div>
      {[...cells, ''].map((c, i) => {
        const right = i === 0 || i === 3;
        const bg = i === 4 ? (alt ? 'bg-[#9bc5e8]' : 'bg-[#a3cff2]') : alt ? 'bg-[#f1f1f1]' : 'bg-white';
        return (
          <div key={i} className={`flex shrink-0 items-center border-r border-b pt-[2px] whitespace-pre ${i === 4 ? 'border-r-[#d3dde6] border-b-[#d5e6f5]' : 'border-[#e1e1e1]'} ${widths[i + 2]} ${bg} ${right ? 'justify-end' : 'pl-[3px] tracking-[0.15px]'}`}>
            {c}
          </div>
        );
      })}
      <div className="w-[94px] shrink-0 border-r border-b border-[#f6f6f8]" />
      <div className="w-[94px] shrink-0 border-r border-b border-[#f6f6f8]" />
      <div className="flex-1 border-b border-[#f6f6f8]" />
    </div>
  );
}

function Datasheet() {
  return (
    <main className="flex min-w-0 flex-1 flex-col overflow-hidden">
      <DocTabs />
      <div className="flex flex-1 flex-col border-l border-[#8e9398] bg-white text-[13px] leading-none text-[#333]">
        <HeaderRow />
        {rows.map((r, i) => <DataRow key={i} cells={r} index={i} />)}
        {Array.from({ length: 12 }, (_, r) => (
          <div key={r} className="flex h-[20px] shrink-0">
            {widths.map((w, c) => (
              <div key={c} className={`shrink-0 border-r border-b ${w} ${c === 0 ? 'border-[#ececf4] bg-[#f6f8ff]' : 'border-[#f6f6f8]'}`} />
            ))}
          </div>
        ))}
      </div>
    </main>
  );
}

export default function App() {
  return (
    <div className="flex h-[660px] w-[1366px] overflow-hidden bg-white font-['Noto_Sans',sans-serif]">
      <Taskbar />
      <div className="flex min-w-0 flex-1 flex-col">
        <Header />
        <Ribbon />
        <div className="flex min-h-0 flex-1">
          <NavPane />
          <div className="w-1 shrink-0 bg-[#f0f0f0]" />
          <Datasheet />
        </div>
      </div>
    </div>
  );
}
